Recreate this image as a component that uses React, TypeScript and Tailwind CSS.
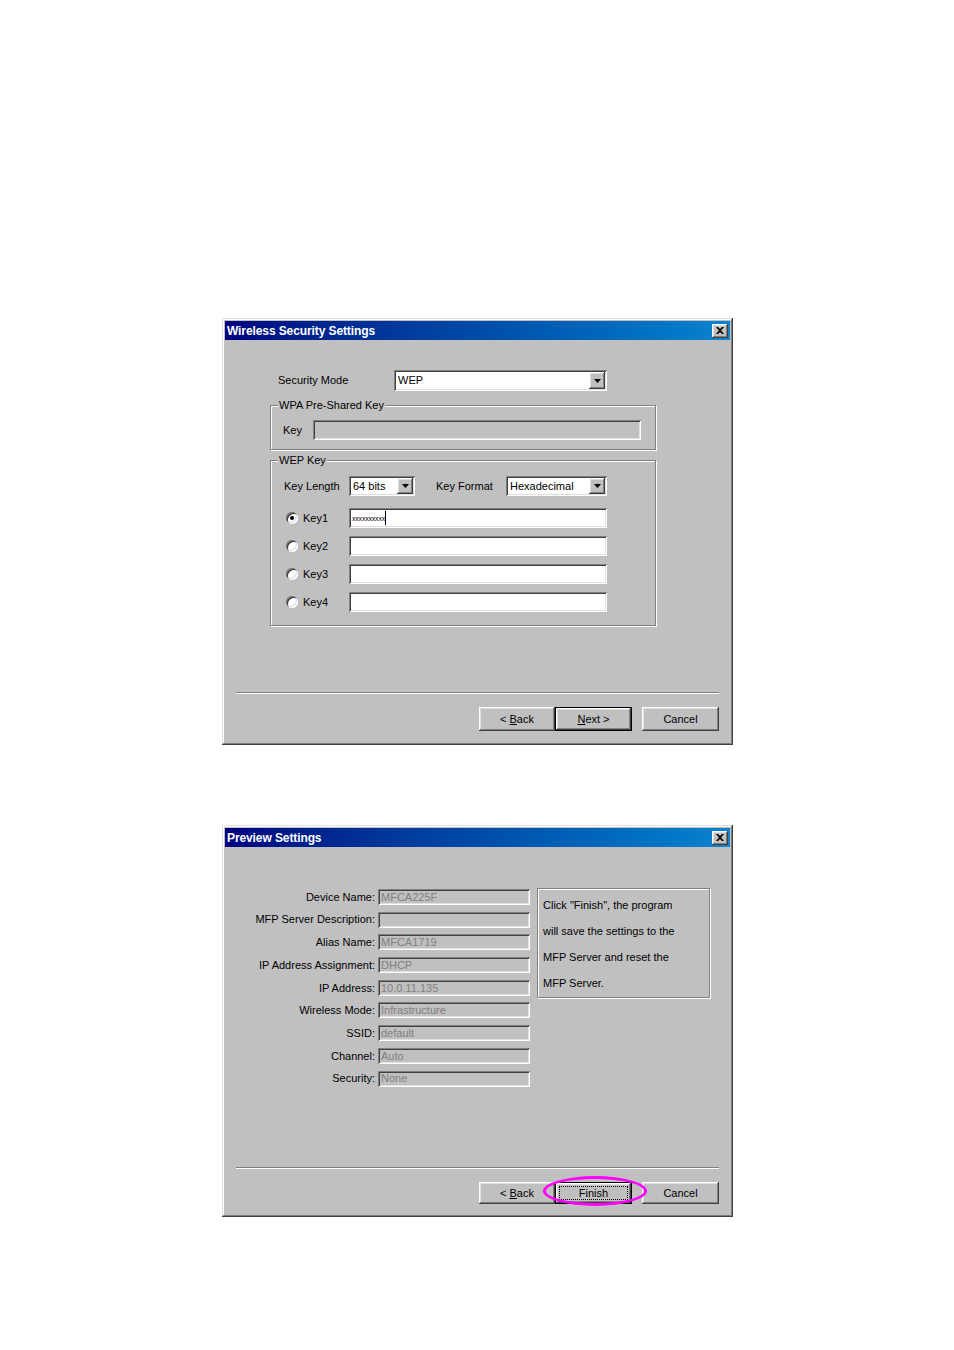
import React from "react";

const sunken =
  "shadow-[inset_1px_1px_#808080,inset_-1px_-1px_#fff,inset_2px_2px_#404040,inset_-2px_-2px_#dfdfdf]";
const raised =
  "shadow-[inset_-1px_-1px_#404040,inset_1px_1px_#fff,inset_-2px_-2px_#808080,inset_2px_2px_#dfdfdf]";

function TitleBar({ title }: { title: string }) {
  return (
    <div className="flex h-[19px] items-center justify-between bg-gradient-to-r from-[#000080] to-[#1084d0] pl-[2px] pr-[2px]">
      <span className="text-[12px] font-bold leading-none tracking-[-0.1px] text-white">{title}</span>
      <div className={`flex h-[14px] w-[16px] items-center justify-center bg-[#c0c0c0] ${raised}`}>
        <svg width="8" height="7" viewBox="0 0 8 7">
          <path d="M0 0h2l2 2 2-2h2L5 3.5 8 7H6L4 5 2 7H0l3-3.5z" fill="#000" />
        </svg>
      </div>
    </div>
  );
}

function Window({ title, className, children }: { title: string; className: string; children: React.ReactNode }) {
  return (
    <div
      className={`flex w-[511px] flex-col bg-[#c0c0c0] p-[3px] shadow-[inset_-1px_-1px_#404040,inset_1px_1px_#dfdfdf,inset_-2px_-2px_#808080,inset_2px_2px_#fff] ${className}`}
    >
      <TitleBar title={title} />
      <div className="flex flex-1 flex-col">{children}</div>
    </div>
  );
}

function Select({ value, className }: { value: string; className: string }) {
  return (
    <div className={`flex items-center bg-white p-[2px] ${sunken} ${className}`}>
      <span className="flex-1 pl-[2px] leading-none">{value}</span>
      <div className={`flex h-full w-[16px] items-center justify-center bg-[#c0c0c0] ${raised}`}>
        <svg width="7" height="4" viewBox="0 0 7 4">
          <path d="M0 0h7L3.5 4z" fill="#000" />
        </svg>
      </div>
    </div>
  );
}

function Radio({ checked }: { checked?: boolean }) {
  return (
    <div
      className={`flex h-[12px] w-[12px] items-center justify-center rounded-full bg-white shadow-[inset_1px_1px_#808080,inset_-1px_-1px_#fff,inset_2px_2px_#404040,inset_-2px_-2px_#dfdfdf]`}
    >
      {checked && <div className="h-[4px] w-[4px] rounded-full bg-black" />}
    </div>
  );
}

function Button({ children, className, isDefault }: { children: React.ReactNode; className: string; isDefault?: boolean }) {
  if (isDefault) {
    return (
      <div className={`border border-black bg-[#c0c0c0] ${className}`}>
        <div className={`flex h-full w-full items-center justify-center ${raised}`}>{children}</div>
      </div>
    );
  }
  return <div className={`flex items-center justify-center bg-[#c0c0c0] ${raised} ${className}`}>{children}</div>;
}

function Separator() {
  return <div className="ml-[11px] h-[2px] w-[483px] border-t border-b border-t-[#808080] border-b-white" />;
}

const previewRows: [string, string][] = [
  ["Device Name:", "MFCA225F"],
  ["MFP Server Description:", ""],
  ["Alias Name:", "MFCA1719"],
  ["IP Address Assignment:", "DHCP"],
  ["IP Address:", "10.0.11.135"],
  ["Wireless Mode:", "Infrastructure"],
  ["SSID:", "default"],
  ["Channel:", "Auto"],
  ["Security:", "None"],
];

export default function App() {
  return (
    <div className="min-h-[1350px] bg-white pt-[318px] pl-[222px] text-[11px] text-black [font-family:'Liberation_Sans',Arial,sans-serif]">
      <Window title="Wireless Security Settings" className="h-[427px]">
        <div className="pl-[45px]">
          <div className="flex items-center pt-[30px]">
            <span className="w-[124px] pl-[8px]">Security Mode</span>
            <Select value="WEP" className="h-[21px] w-[213px]" />
          </div>

          <fieldset className="mt-[8px] w-[386px] border border-[#808080] px-[12px] pb-[9px] shadow-[inset_1px_1px_#fff,1px_1px_#fff]">
            <legend className="-ml-[5px] bg-[#c0c0c0] px-[1px] leading-[13px]">WPA Pre-Shared Key</legend>
            <div className="mt-[8px] flex items-center">
              <span className="w-[30px]">Key</span>
              <div className={`h-[20px] w-[328px] bg-[#c0c0c0] ${sunken}`} />
            </div>
          </fieldset>

          <fieldset className="mt-[4px] w-[386px] border border-[#808080] px-[13px] pb-[13px] shadow-[inset_1px_1px_#fff,1px_1px_#fff]">
            <legend className="-ml-[6px] bg-[#c0c0c0] px-[1px] leading-[13px]">WEP Key</legend>
            <div className="mt-[9px] flex items-center">
              <span className="w-[65px]">Key Length</span>
              <Select value="64 bits" className="h-[20px] w-[66px]" />
              <span className="ml-[21px] w-[70px]">Key Format</span>
              <Select value="Hexadecimal" className="h-[20px] w-[101px]" />
            </div>
            <div className="mt-[12px] flex flex-col gap-[8px]">
              {["Key1", "Key2", "Key3", "Key4"].map((k, i) => (
                <div key={k} className="flex items-center">
                  <div className="flex w-[65px] items-center pl-[2px]">
                    <Radio checked={i === 0} />
                    <span className="ml-[5px]">{k}</span>
                  </div>
                  <div className={`flex h-[20px] w-[258px] items-center bg-white pl-[3px] ${sunken}`}>
                    {i === 0 && (
                      <>
                        <span className="text-[7px] leading-none tracking-[-0.2px]">xxxxxxxxxx</span>
                        <span className="h-[14px] w-[1px] bg-black" />
                      </>
                    )}
                  </div>
                </div>
              ))}
            </div>
          </fieldset>
        </div>

        <div className="mt-auto">
          <Separator />
          <div className="mt-[13px] flex justify-end pr-[11px] pb-[11px]">
            <Button className="h-[24px] w-[76px]">
              &lt; <span className="ml-[3px] underline">B</span>ack
            </Button>
            <Button isDefault className="h-[24px] w-[77px]">
              <span className="underline">N</span>ext &gt;
            </Button>
            <Button className="ml-[10px] h-[24px] w-[77px]">Cancel</Button>
          </div>
        </div>
      </Window>

      <Window title="Preview Settings" className="mt-[80px] h-[392px]">
        <div className="flex items-start pt-[42px]">
          <div className="grid grid-cols-[150px_152px] gap-x-[3px] gap-y-[6.7px]">
            {previewRows.map(([label, value]) => (
              <React.Fragment key={label}>
                <span className="flex h-[16px] items-center justify-end">{label}</span>
                <div className={`flex h-[16px] items-center bg-[#c0c0c0] pl-[3px] text-[#808080] ${sunken}`}>
                  {value}
                </div>
              </React.Fragment>
            ))}
          </div>
          <div className="-mt-[1px] ml-[7px] h-[110px] w-[173px] border border-[#808080] px-[5px] pt-[3px] leading-[26px] shadow-[inset_1px_1px_#fff,1px_1px_#fff]">
            <div>Click "Finish", the program</div>
            <div>will save the settings to the</div>
            <div>MFP Server and reset the</div>
            <div>MFP Server.</div>
          </div>
        </div>

        <div className="mt-auto">
          <Separator />
          <div className="mt-[13px] flex justify-end pr-[11px] pb-[10px]">
            <Button className="h-[22px] w-[76px]">
              &lt; <span className="ml-[3px] underline">B</span>ack
            </Button>
            <div className="relative">
              <Button isDefault className="h-[22px] w-[77px]">
                <span className="flex h-[14px] w-[69px] items-center justify-center border border-dotted border-black">
                  Finish
                </span>
              </Button>
              <div className="absolute -top-[6px] -right-[15px] -bottom-[2px] -left-[12px] rounded-[50%] border-[3px] border-[#ff00ff]" />
            </div>
            <Button className="ml-[10px] h-[22px] w-[77px]">Cancel</Button>
          </div>
        </div>
      </Window>
    </div>
  );
}
